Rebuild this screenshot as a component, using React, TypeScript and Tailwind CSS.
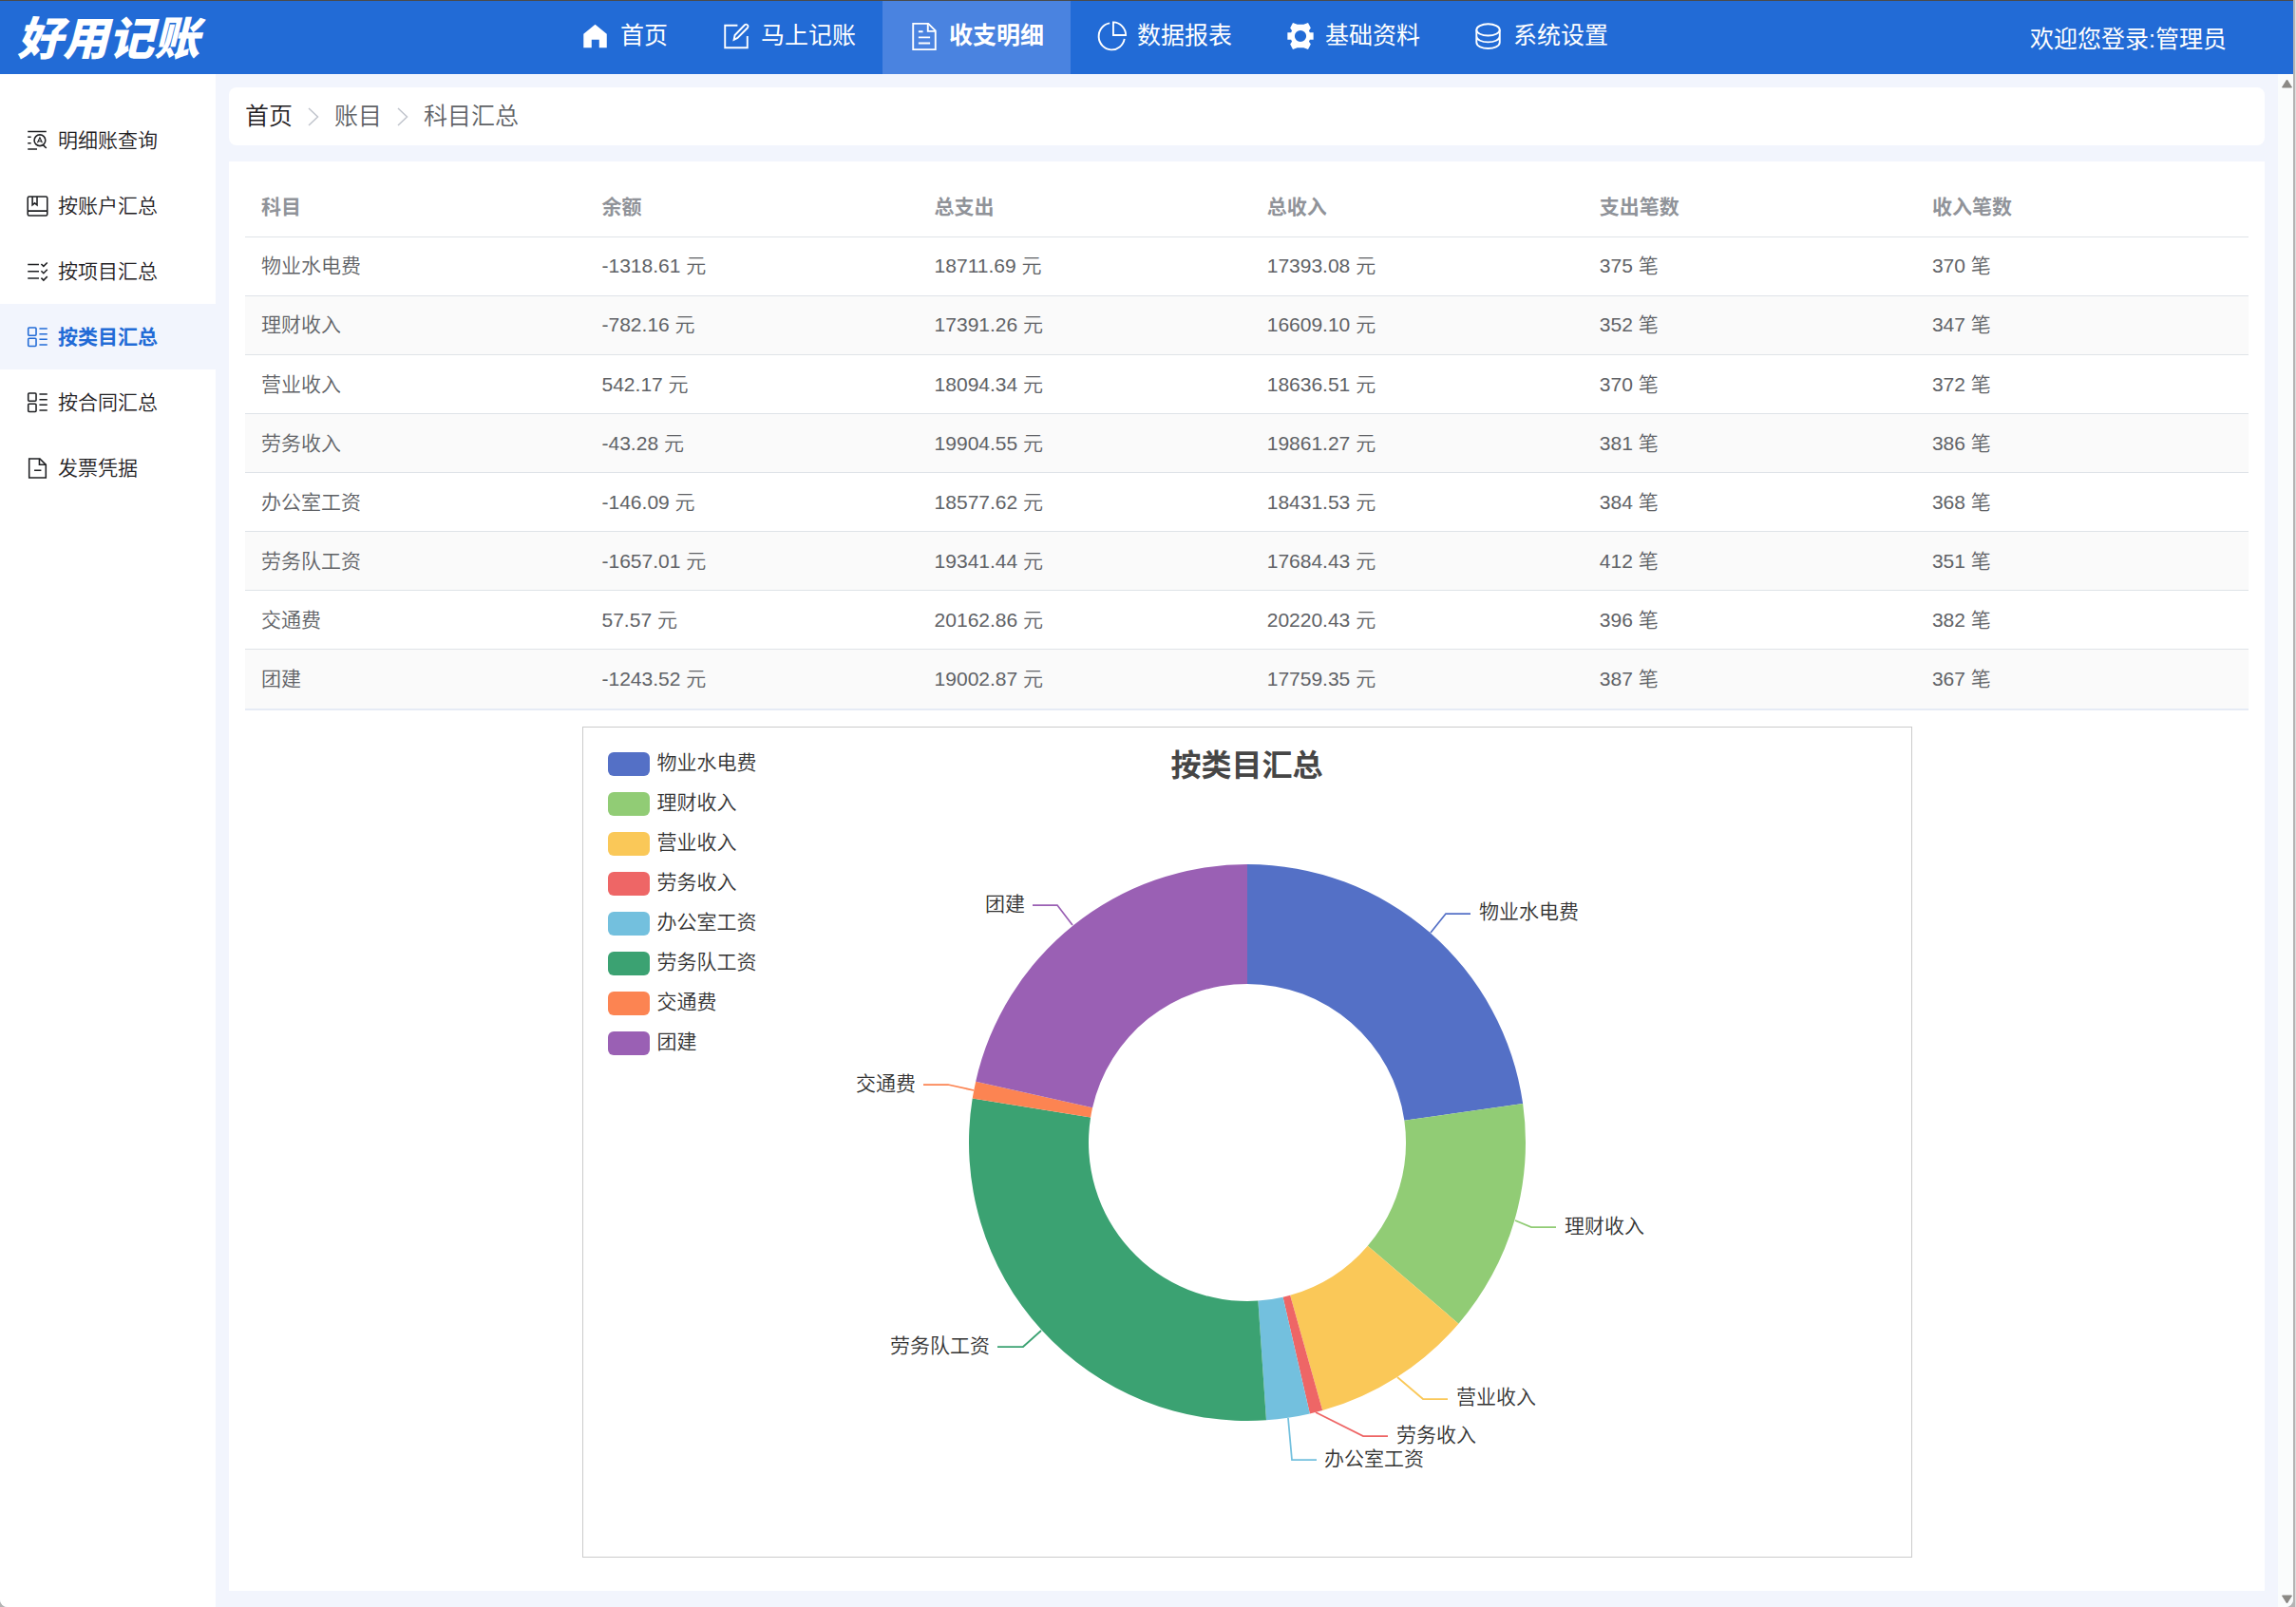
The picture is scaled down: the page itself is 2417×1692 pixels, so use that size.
import type { ReactNode } from "react";

const navItems = [
  { label: "首页", icon: "home" },
  { label: "马上记账", icon: "edit" },
  { label: "收支明细", icon: "doc", active: true },
  { label: "数据报表", icon: "pie" },
  { label: "基础资料", icon: "gear" },
  { label: "系统设置", icon: "coin" },
];

const sideItems = [
  { label: "明细账查询", icon: "search" },
  { label: "按账户汇总", icon: "book" },
  { label: "按项目汇总", icon: "checks" },
  { label: "按类目汇总", icon: "blocks", active: true },
  { label: "按合同汇总", icon: "blocks" },
  { label: "发票凭据", icon: "file" },
];

const columns = ["科目", "余额", "总支出", "总收入", "支出笔数", "收入笔数"];

const rows = [
  ["物业水电费", "-1318.61", "18711.69", "17393.08", 375, 370],
  ["理财收入", "-782.16", "17391.26", "16609.10", 352, 347],
  ["营业收入", "542.17", "18094.34", "18636.51", 370, 372],
  ["劳务收入", "-43.28", "19904.55", "19861.27", 381, 386],
  ["办公室工资", "-146.09", "18577.62", "18431.53", 384, 368],
  ["劳务队工资", "-1657.01", "19341.44", "17684.43", 412, 351],
  ["交通费", "57.57", "20162.86", "20220.43", 396, 382],
  ["团建", "-1243.52", "19002.87", "17759.35", 387, 367],
];

const slices = [
  { name: "物业水电费", value: 1318.61, color: "#5470c6", line: "894,217 910,197 936,197", x: 945, y: 202 },
  { name: "理财收入", value: 782.16, color: "#91cc75", line: "983,520 1000,527 1026,527", x: 1035, y: 533 },
  { name: "营业收入", value: 542.17, color: "#fac858", line: "859,685 886,708 912,708", x: 921, y: 713 },
  { name: "劳务收入", value: 43.28, color: "#ee6666", line: "773,722 823,747 849,747", x: 858, y: 753 },
  { name: "办公室工资", value: 146.09, color: "#73c0de", line: "744,728 748,772 774,772", x: 782, y: 778 },
  { name: "劳务队工资", value: 1657.01, color: "#3ba272", line: "484,636 465,653 438,653", x: 430, y: 659, end: true },
  { name: "交通费", value: 57.57, color: "#fc8452", line: "413,383 386,377 360,377", x: 352, y: 383, end: true },
  { name: "团建", value: 1243.52, color: "#9a60b4", line: "517,209 501,188 475,188", x: 467, y: 194, end: true },
];

const icons: Record<string, ReactNode> = {
  home: <path d="M16 4 L29 14.5 V30 H20.5 V21 H12 V30 H3 V14.5 Z" fill="currentColor" stroke="none" />,
  edit: (
    <>
      <path d="M18 5 H4 V30 H29 V17" />
      <path d="M14 21 L15 16 L26 4.5 Q28 3 29.500 5 Q30.500 6.500 29 8 L18 19 Z" />
    </>
  ),
  doc: (
    <>
      <path d="M4 3 H21 L29 11 V32 H4 Z" />
      <path d="M20.500 3 V11.500 H29 M10 12 H15 M10 18.500 H23 M10 25 H23" />
    </>
  ),
  pie: (
    <>
      <path d="M13.500 2.500 A14.500 15 0 1 0 30 20" />
      <path d="M17.500 1.500 V16 H31.500 A14.500 14.500 0 0 0 17.500 1.500 Z" />
    </>
  ),
  gear: (
    <path
      fill="currentColor"
      stroke="none"
      fillRule="evenodd"
      d="M8 2 L13 4 H20 L25 2 L28 8 L26 11 L27 13 H31 V21 H27 L26 23 L28 26 L25 32 L20 30 H13 L8 32 L5 26 L7 23 L6 21 H2 V13 H6 L7 11 L5 8 Z M16.500 10.500 A6.500 6.500 0 1 0 16.500 23.500 A6.500 6.500 0 1 0 16.500 10.500 Z"
    />
  ),
  coin: (
    <>
      <ellipse cx="16" cy="10" rx="13" ry="6.500" />
      <path d="M3 10 V17 C3 26 29 26 29 17 V10 M3 17 V24 C3 33 29 33 29 24 V17" />
    </>
  ),
  search: (
    <>
      <path d="M1 1.500 H21 M1 7.500 H4.500 M1 14 H4.500 M1 20.500 H11 M17.500 16 L21 19.500" />
      <circle cx="14" cy="11" r="6" />
      <path d="M11.500 13.500 L14 8 L16.500 13.500 M12.500 12 H15.500" strokeWidth="1.200" />
    </>
  ),
  book: (
    <>
      <rect x="1" y="1" width="21" height="20.500" rx="1.500" />
      <path d="M1 16.500 H22 M6 1 V10 L8.500 8 L11 10 V1" />
    </>
  ),
  checks: (
    <path d="M1 3.500 H13 M1 11 H13 M1 18.500 H13 M15.500 3 L18 5.500 L22 1.500 M15.500 10.500 L18 13 L22 9 M15.500 18 L18 20.500 L22 16.500" />
  ),
  blocks: (
    <>
      <rect x="1.500" y="1" width="8.500" height="8.500" rx="1" />
      <rect x="1.500" y="12.500" width="8.500" height="8.500" rx="1" />
      <path d="M13.500 2 H22 M13.500 8 H22 M13.500 13.500 H22 M13.500 19.500 H22" />
    </>
  ),
  file: (
    <>
      <path d="M2.500 1 H14 L20.500 7.500 V21.500 H2.500 Z" />
      <path d="M13.500 1 V7.500 H20.500 M8 13.500 H15.500" />
    </>
  ),
};

const point = (r: number, turn: number) => {
  const a = turn * Math.PI * 2;
  return `${701 + r * Math.sin(a)} ${438 - r * Math.cos(a)}`;
};

const slicePath = (from: number, to: number) => {
  const large = to - from > 0.5 ? 1 : 0;
  return `M${point(293, from)} A293 293 0 ${large} 1 ${point(293, to)} L${point(167, to)} A167 167 0 ${large} 0 ${point(167, from)} Z`;
};

const Header = () => {
  return (
    <header className="flex h-[78px] items-stretch border-t border-[#4a4a4a] bg-[#226bd6] font-normal text-white">
      <div className="flex w-[583px] items-center pt-1 pl-[18px]">
        <a href="#" className="text-5xl font-black italic">
          好用记账
        </a>
      </div>
      <nav className="flex text-[25px]">
        {navItems.map((item) => (
          <a
            key={item.label}
            href="#"
            className={
              item.active
                ? "flex items-center gap-[10px] bg-[#4a83e0] px-7 pb-1 font-bold"
                : "flex items-center gap-[10px] px-7 pb-1"
            }
          >
            <svg className="size-8" viewBox="0 0 33 34" fill="none" stroke="currentColor" strokeWidth="2">
              {icons[item.icon]}
            </svg>
            {item.label}
          </a>
        ))}
      </nav>
      <div className="flex flex-1 items-center justify-end pt-1 pr-[70px] text-[25px]">欢迎您登录:管理员</div>
    </header>
  );
};

const Sidebar = () => {
  return (
    <aside className="w-[227px] shrink-0 bg-white pt-[35px]">
      <nav className="flex flex-col">
        {sideItems.map((item) => (
          <a
            key={item.label}
            href="#"
            className={
              item.active
                ? "flex h-[69px] items-center gap-[10px] bg-[#f2f5fd] pl-7 text-[21px] font-bold text-[#226bd6]"
                : "flex h-[69px] items-center gap-[10px] pl-7 text-[21px] text-[#1f2023]"
            }
          >
            <svg className="h-[22px] w-[23px]" viewBox="0 0 23 22.500" fill="none" stroke="currentColor" strokeWidth="1.600">
              {icons[item.icon]}
            </svg>
            {item.label}
          </a>
        ))}
      </nav>
    </aside>
  );
};

const Chevron = () => (
  <svg className="h-5 w-3" viewBox="0 0 12 20" fill="none" stroke="#c0c4cc" strokeWidth="1.500">
    <path d="M1 1 L10.500 10 L1 19" />
  </svg>
);

const SummaryTable = () => {
  return (
    <table className="h-[561px] w-full table-fixed border-b-2 border-[#e6ebf5] text-left text-[21px] text-[#606266]">
      <thead>
        <tr className="h-[62px] border-b border-[#dfe3e8] text-[#909399]">
          {columns.map((name, i) => (
            <th key={name} className={i === 0 ? "w-[17%] px-[17px]" : "px-[17px]"}>
              {name}
            </th>
          ))}
        </tr>
      </thead>
      <tbody>
        {rows.map(([name, ...cells]) => (
          <tr key={name} className="border-b border-[#dfe3e8] last:border-0 even:bg-[#fafafa]">
            <td className="px-[17px]">{name}</td>
            {cells.map((cell, i) => (
              <td key={i} className="px-[17px]">
                {cell} {i < 3 ? "元" : "笔"}
              </td>
            ))}
          </tr>
        ))}
      </tbody>
    </table>
  );
};

const DonutChart = () => {
  const total = slices.reduce((sum, s) => sum + s.value, 0);
  let turn = 0;

  return (
    <section className="mx-auto mt-[17px] grid w-full max-w-[1400px] border border-[#ccc]">
      <svg className="col-start-1 row-start-1 w-full" viewBox="2 1 1398 873">
        {slices.map((s) => {
          const from = turn;
          turn += s.value / total;
          return (
            <g key={s.name}>
              <path d={slicePath(from, turn)} fill={s.color} />
              <polyline points={s.line} fill="none" stroke={s.color} strokeWidth="1.750" />
              <text x={s.x} y={s.y} textAnchor={s.end ? "end" : "start"} className="fill-[#333] text-[21px]">
                {s.name}
              </text>
            </g>
          );
        })}
      </svg>
      <h2 className="col-start-1 row-start-1 self-start pt-4 text-center text-[32px] font-bold text-[#464646]">
        按类目汇总
      </h2>
      <ul className="col-start-1 row-start-1 flex flex-col gap-[17px] self-start justify-self-start p-[26px]">
        {slices.map((s) => (
          <li key={s.name} className="flex h-[25px] items-center gap-2 text-[21px] text-[#333]">
            <span className="h-[25px] w-11 rounded-md" style={{ backgroundColor: s.color }} />
            <span className="pb-1">{s.name}</span>
          </li>
        ))}
      </ul>
    </section>
  );
};

const App = () => {
  return (
    <div className="flex min-h-screen bg-[#b4b4b4] font-['Liberation_Sans','Noto_Sans_CJK_SC',sans-serif] font-[350]">
      <div className="flex min-w-0 flex-1 flex-col overflow-hidden rounded-b-lg bg-[#f2f5fd]">
        <Header />
        <div className="flex flex-1">
          <Sidebar />
          <main className="flex min-w-0 flex-1 flex-col px-[14px] pt-[14px] pb-[17px]">
            <nav className="flex h-[61px] items-center gap-4 rounded-lg bg-white px-[17px] text-[25px] text-[#606266]">
              <a href="#" className="text-[#1f2023]">
                首页
              </a>
              <Chevron />
              <a href="#">账目</a>
              <Chevron />
              <span>科目汇总</span>
            </nav>
            <div className="mt-[17px] flex-1 bg-white px-[17px] pt-[17px] pb-[35px]">
              <SummaryTable />
              <DonutChart />
            </div>
          </main>
          <div className="flex w-4 flex-col items-end justify-between bg-[#fafcfc] pt-[5px] pb-[3px] text-[#8b8985]">
            <svg className="h-[10px] w-[13px]" viewBox="0 0 13 10">
              <path d="M6.500 1 L11.500 9 H1.500 Z" fill="currentColor" stroke="currentColor" strokeLinejoin="round" />
            </svg>
            <svg className="h-[10px] w-[13px]" viewBox="0 0 13 10">
              <path d="M6.500 9 L11.500 1 H1.500 Z" fill="currentColor" stroke="currentColor" strokeLinejoin="round" />
            </svg>
          </div>
        </div>
      </div>
      <div className="w-[3px] border-l-2 border-[#b4b4b4] bg-[#dedede]" />
    </div>
  );
};

export default App;
